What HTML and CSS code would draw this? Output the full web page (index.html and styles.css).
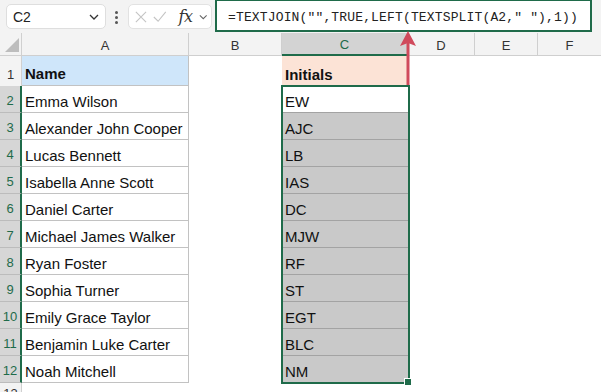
FILE: index.html
```html
<!DOCTYPE html>
<html>
<head>
<meta charset="utf-8">
<link rel="stylesheet" href="styles.css">
</head>
<body>
<div class="app">
  <div class="toolbar">
    <div class="namebox"><span class="nb-text">C2</span>
      <svg class="chev" width="10" height="6" viewBox="0 0 10 6"><path d="M1 1 L5 5 L9 1" fill="none" stroke="#333" stroke-width="1.3"/></svg>
    </div>
    <div class="dots"><i></i><i></i><i></i></div>
    <div class="fxbox">
      <svg width="14" height="14" viewBox="0 0 14 14"><path d="M1 1 L13 13 M13 1 L1 13" stroke="#c4c4c4" stroke-width="1.3" fill="none"/></svg>
      <svg width="16" height="14" viewBox="0 0 16 14"><path d="M1 7 L6 12 L15 1" stroke="#c4c4c4" stroke-width="1.3" fill="none"/></svg>
      <span class="fx">fx</span>
      <svg width="10" height="6" viewBox="0 0 10 6"><path d="M1 1 L5 5 L9 1" fill="none" stroke="#666" stroke-width="1.2"/></svg>
    </div>
    <div class="formula">=TEXTJOIN("",TRUE,LEFT(TEXTSPLIT(A2," "),1))</div>
  </div>
  <div class="sheet">
    <div class="corner"><svg width="14" height="14" viewBox="0 0 14 14"><path d="M14 0 L14 14 L0 14 Z" fill="#bdbdbd"/></svg></div>
    <div class="ch">A</div><div class="ch">B</div><div class="ch sel">C</div><div class="ch">D</div><div class="ch">E</div><div class="ch last">F</div>

    <div class="rh">1</div><div class="c a hdr-a">Name</div><div class="c"></div><div class="c hdr-c">Initials</div><div class="c"></div><div class="c"></div><div class="c"></div>

    <div class="rh s">2</div><div class="c a">Emma Wilson</div><div class="c"></div><div class="c i act">EW</div><div class="c"></div><div class="c"></div><div class="c"></div>
    <div class="rh s">3</div><div class="c a">Alexander John Cooper</div><div class="c"></div><div class="c i">AJC</div><div class="c"></div><div class="c"></div><div class="c"></div>
    <div class="rh s">4</div><div class="c a">Lucas Bennett</div><div class="c"></div><div class="c i">LB</div><div class="c"></div><div class="c"></div><div class="c"></div>
    <div class="rh s">5</div><div class="c a">Isabella Anne Scott</div><div class="c"></div><div class="c i">IAS</div><div class="c"></div><div class="c"></div><div class="c"></div>
    <div class="rh s">6</div><div class="c a">Daniel Carter</div><div class="c"></div><div class="c i">DC</div><div class="c"></div><div class="c"></div><div class="c"></div>
    <div class="rh s">7</div><div class="c a">Michael James Walker</div><div class="c"></div><div class="c i">MJW</div><div class="c"></div><div class="c"></div><div class="c"></div>
    <div class="rh s">8</div><div class="c a">Ryan Foster</div><div class="c"></div><div class="c i">RF</div><div class="c"></div><div class="c"></div><div class="c"></div>
    <div class="rh s">9</div><div class="c a">Sophia Turner</div><div class="c"></div><div class="c i">ST</div><div class="c"></div><div class="c"></div><div class="c"></div>
    <div class="rh s">10</div><div class="c a">Emily Grace Taylor</div><div class="c"></div><div class="c i">EGT</div><div class="c"></div><div class="c"></div><div class="c"></div>
    <div class="rh s">11</div><div class="c a">Benjamin Luke Carter</div><div class="c"></div><div class="c i">BLC</div><div class="c"></div><div class="c"></div><div class="c"></div>
    <div class="rh s">12</div><div class="c a">Noah Mitchell</div><div class="c"></div><div class="c i">NM</div><div class="c"></div><div class="c"></div><div class="c"></div>
    <div class="rh r13">13</div>

    <div class="selection"><span class="handle"></span></div>
  </div>
  <svg class="arrow" width="20" height="56" viewBox="0 0 20 56">
    <path d="M10 12 L10 54" stroke="#d04a5c" stroke-width="3"/>
    <path d="M10 0 L18 15 L10 12 L2 15 Z" fill="#d04a5c"/>
  </svg>
</div>
</body>
</html>
```
FILE: styles.css
```css
* { box-sizing: border-box; }
html, body { margin: 0; padding: 0; background: #fff; }
body { width: 601px; height: 392px; overflow: hidden; font-family: "Liberation Sans", Arial, sans-serif; }
.app { position: relative; width: 601px; height: 392px; }

.toolbar {
  height: 33px;
  background: #f3f3f3;
  display: flex;
  align-items: flex-start;
  padding-left: 6px;
}
.namebox {
  margin-top: 4px;
  width: 100px; height: 25px;
  background: #fff;
  border: 1px solid #dedede;
  border-radius: 5px;
  display: flex; align-items: center; justify-content: space-between;
  padding: 0 6px 0 6px;
}
.nb-text { font-size: 14px; color: #222; }
.dots {
  margin: 11px 0 0 9px;
  width: 3px;
  display: flex; flex-direction: column; gap: 2px;
}
.dots i { display: block; width: 3px; height: 3px; background: #555; border-radius: 50%; }
.fxbox {
  margin: 4px 0 0 10px;
  width: 84px; height: 25px;
  background: #fff;
  border: 1px solid #e2e2e2;
  border-radius: 5px;
  display: flex; align-items: center;
  padding: 0 4px 0 6px;
  gap: 6px;
}
.fx { font-family: "DejaVu Serif", "Liberation Serif", serif; font-style: italic; font-size: 16px; color: #333; margin-left: 6px; letter-spacing: -0.5px; }
.formula {
  margin: -1px 0 0 3px;
  width: 377px; height: 33px;
  background: #fff;
  border: 2px solid #1f6b4a;
  font-family: "Liberation Mono", "DejaVu Sans Mono", monospace;
  font-size: 13px;
  letter-spacing: 0.15px;
  color: #222;
  padding: 9px 0 0 11px;
  white-space: nowrap;
}

.sheet {
  display: grid;
  grid-template-columns: 22px 167px 93px 126px 67px 63px 63px;
  grid-template-rows: 23px 30px repeat(11, 27px) 9px;
  position: relative;
}
.corner { background: #f3f3f3; display: flex; align-items: flex-end; justify-content: flex-end; padding: 0 2px 3px 0; border-right: 1px solid #d0d0d0; border-bottom: 1px solid #d0d0d0; }
.ch {
  background: #f3f3f3;
  border-right: 1px solid #cfcfcf;
  border-bottom: 1px solid #cfcfcf;
  font-size: 13px; color: #333;
  display: flex; align-items: center; justify-content: center;
  padding-top: 2px;
}
.ch.last { border-right: none; }
.ch.sel { background: #d3d3d3; color: #1f6b4a; border-bottom: 2px solid #1f6b4a; }
.rh {
  background: #f3f3f3;
  font-size: 13px; color: #333;
  display: flex; align-items: flex-end; justify-content: center;
  padding-bottom: 4px;
  border-right: 1px solid #d0d0d0;
}
.rh.s { background: #d6d6d6; color: #1f6b4a; border-right: 2px solid #1f6b4a; border-bottom: 1px solid #bcbcbc; }
.rh.r13 { align-items: flex-start; padding: 3px 0 0; font-size: 13px; }
.c {
  font-size: 15px; color: #111;
  display: flex; align-items: flex-end;
  padding: 0 0 2px 3px;
  white-space: nowrap;
}
.c.a { border-right: 1px solid #c2c2c2; border-bottom: 1px solid #c2c2c2; }
.hdr-a { background: #cfe6fa; font-weight: bold; padding-bottom: 3px; }
.hdr-c { background: #fce3d6; font-weight: bold; padding-bottom: 3px; }
.c.i { background: #c9c9c9; border-bottom: 1px solid #a3a3a3; }
.c.i.act { background: #fff; }
.selection {
  position: absolute;
  grid-column: 4 / 5; grid-row: 3 / 14;
  top: -1px; bottom: -1px; left: -1px; right: -2px;
  border: 2px solid #1f6b4a;
  pointer-events: none;
}
.handle {
  position: absolute; right: -4px; bottom: -4px;
  width: 6px; height: 6px; background: #1f6b4a;
  border: 1px solid #fff;
  box-sizing: content-box;
}
.arrow { position: absolute; left: 398px; top: 31px; }
```
